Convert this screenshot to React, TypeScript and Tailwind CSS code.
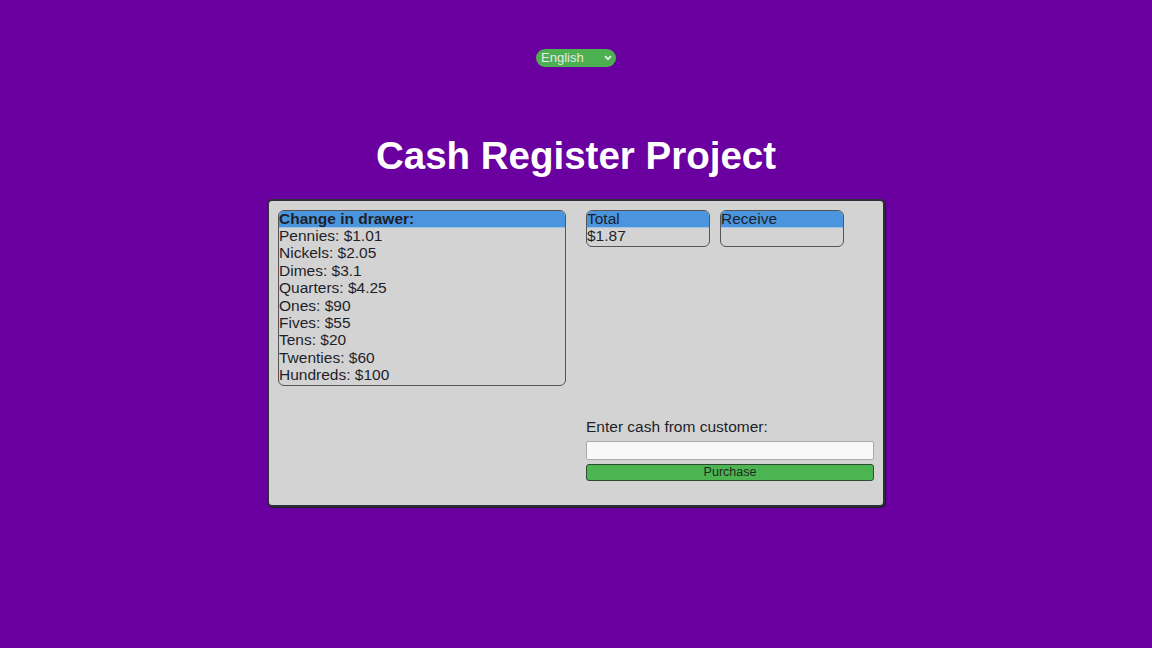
import React from "react";

const items = [
  "Pennies: $1.01",
  "Nickels: $2.05",
  "Dimes: $3.1",
  "Quarters: $4.25",
  "Ones: $90",
  "Fives: $55",
  "Tens: $20",
  "Twenties: $60",
  "Hundreds: $100",
];

export default function App() {
  return (
    <div
      className="w-[1152px] h-[648px] bg-[#6a009f] flex flex-col items-center pt-[49px]"
      style={{ fontFamily: '"Liberation Sans", Arial, sans-serif' }}
    >
      <div className="relative w-[80px] h-[18px] rounded-full bg-[#4caf50] flex items-center pl-[5px]">
        <span className="text-[13px] leading-[18px] text-[#e8e8e8]">English</span>
        <svg className="absolute right-[4px] top-[6px]" width="8" height="6" viewBox="0 0 8 6">
          <path d="M1 1.2 L4 4.2 L7 1.2" fill="none" stroke="#eeeeee" strokeWidth="1.8" />
        </svg>
      </div>

      <h1 className="mt-[67px] text-[38.5px] leading-[44px] font-bold text-white">
        Cash Register Project
      </h1>

      <div className="mt-[21px] w-[618px] h-[308px] bg-[#d3d3d3] border-2 border-[#2e2e3a] rounded-[5px] shadow-[1px_1px_0_#1e1e2a] flex gap-[20px] pt-[9px] pl-[9px] text-[15.5px] leading-[17.4px] text-[#1f1f2a]">
        <div className="w-[288px] h-[176px] border border-[#555] rounded-[6px] overflow-hidden">
          <div className="bg-[#4a95dd] font-bold h-[17px] leading-[15px] border-b border-[#9cc4ea]">
            Change in drawer:
          </div>
          {items.map((t) => (
            <div key={t} className="h-[17.4px] leading-[16px]">
              {t}
            </div>
          ))}
        </div>

        <div className="w-[288px] h-[271px] flex flex-col justify-between">
          <div className="flex gap-[10px]">
            <div className="w-[124px] h-[37px] border border-[#555] rounded-[6px] overflow-hidden">
              <div className="bg-[#4a95dd] h-[17px] leading-[15px] border-b border-[#9cc4ea]">Total</div>
              <div className="leading-[16px]">$1.87</div>
            </div>
            <div className="w-[124px] h-[37px] border border-[#555] rounded-[6px] overflow-hidden">
              <div className="bg-[#4a95dd] h-[17px] leading-[15px] border-b border-[#9cc4ea]">Receive</div>
            </div>
          </div>

          <div className="flex flex-col">
            <label className="leading-[18px] mb-[5px]">Enter cash from customer:</label>
            <input
              className="w-[288px] h-[19px] bg-[#f8f8f8] border border-[#aaa] rounded-[2px] outline-none"
              type="text"
            />
            <button className="mt-[4px] w-[288px] h-[17px] bg-[#4cb552] border border-[#2e4a30] rounded-[3px] text-[12.5px] leading-[15px] text-[#1f2a1f]">
              Purchase
            </button>
          </div>
        </div>
      </div>
    </div>
  );
}
